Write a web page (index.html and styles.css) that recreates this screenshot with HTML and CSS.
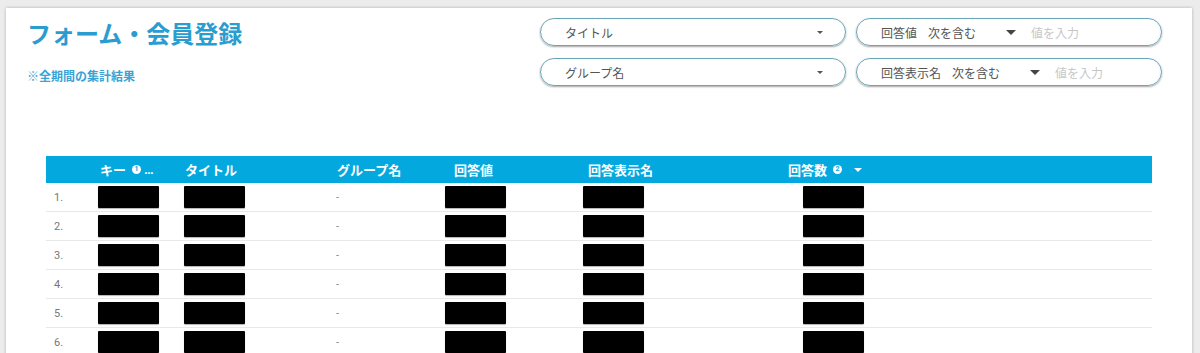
FILE: index.html
```html
<!DOCTYPE html>
<html>
<head>
	<meta charset="utf-8">
	<title>フォーム・会員登録</title>
	<link rel="stylesheet" href="styles.css">
</head>
<body>

	<div class="card">
		<div class="top">
			<div class="heading">
				<h1 class="title">フォーム・会員登録</h1>
				<p class="note">※全期間の集計結果</p>
			</div>

			<div class="filters">
				<div class="pill select">
					<span>タイトル</span>
					<i class="caret-sm"></i>
				</div>
				<div class="pill">
					<span class="label">回答値</span>
					<span class="op">次を含む</span>
					<i class="caret"></i>
					<span class="placeholder">値を入力</span>
				</div>
				<div class="pill select">
					<span>グループ名</span>
					<i class="caret-sm"></i>
				</div>
				<div class="pill">
					<span class="label">回答表示名</span>
					<span class="op">次を含む</span>
					<i class="caret"></i>
					<span class="placeholder">値を入力</span>
				</div>
			</div>
		</div>

		<div class="table">
			<div class="row head">
				<div class="cell"></div>
				<div class="cell key">キー <span class="num-badge">1</span><span class="dots">…</span></div>
				<div class="cell c-title">タイトル</div>
				<div class="cell c-group">グループ名</div>
				<div class="cell c-value">回答値</div>
				<div class="cell c-name">回答表示名</div>
				<div class="cell c-count">回答数 <span class="num-badge">2</span><i class="caret-head"></i></div>
				<div class="cell"></div>
			</div>

			<div class="row">
				<div class="cell idx">1.</div>
				<div class="cell"><span class="mask"></span></div>
				<div class="cell c-title"><span class="mask"></span></div>
				<div class="cell c-group dash">-</div>
				<div class="cell"><span class="mask"></span></div>
				<div class="cell c-name"><span class="mask"></span></div>
				<div class="cell c-count"><span class="mask"></span></div>
				<div class="cell"></div>
			</div>
			<div class="row">
				<div class="cell idx">2.</div>
				<div class="cell"><span class="mask"></span></div>
				<div class="cell c-title"><span class="mask"></span></div>
				<div class="cell c-group dash">-</div>
				<div class="cell"><span class="mask"></span></div>
				<div class="cell c-name"><span class="mask"></span></div>
				<div class="cell c-count"><span class="mask"></span></div>
				<div class="cell"></div>
			</div>
			<div class="row">
				<div class="cell idx">3.</div>
				<div class="cell"><span class="mask"></span></div>
				<div class="cell c-title"><span class="mask"></span></div>
				<div class="cell c-group dash">-</div>
				<div class="cell"><span class="mask"></span></div>
				<div class="cell c-name"><span class="mask"></span></div>
				<div class="cell c-count"><span class="mask"></span></div>
				<div class="cell"></div>
			</div>
			<div class="row">
				<div class="cell idx">4.</div>
				<div class="cell"><span class="mask"></span></div>
				<div class="cell c-title"><span class="mask"></span></div>
				<div class="cell c-group dash">-</div>
				<div class="cell"><span class="mask"></span></div>
				<div class="cell c-name"><span class="mask"></span></div>
				<div class="cell c-count"><span class="mask"></span></div>
				<div class="cell"></div>
			</div>
			<div class="row">
				<div class="cell idx">5.</div>
				<div class="cell"><span class="mask"></span></div>
				<div class="cell c-title"><span class="mask"></span></div>
				<div class="cell c-group dash">-</div>
				<div class="cell"><span class="mask"></span></div>
				<div class="cell c-name"><span class="mask"></span></div>
				<div class="cell c-count"><span class="mask"></span></div>
				<div class="cell"></div>
			</div>
			<div class="row">
				<div class="cell idx">6.</div>
				<div class="cell"><span class="mask"></span></div>
				<div class="cell c-title"><span class="mask"></span></div>
				<div class="cell c-group dash">-</div>
				<div class="cell"><span class="mask"></span></div>
				<div class="cell c-name"><span class="mask"></span></div>
				<div class="cell c-count"><span class="mask"></span></div>
				<div class="cell"></div>
			</div>
		</div>
	</div>

</body>
</html>
```

FILE: styles.css
```css
* {
	margin: 0;
	padding: 0;
	box-sizing: border-box;
}

html {
	font-family: Roboto, "Noto Sans CJK JP", sans-serif;
}

body {
	background-color: #ececec;
	padding: 8px 8px 0 6px;
	overflow: hidden;
}

.card {
	background-color: #fff;
	min-height: 400px;
	box-shadow: 0 0 3px rgba(0, 0, 0, .25);
}

.top {
	display: flex;
	justify-content: space-between;
	align-items: flex-start;
	padding: 10px 30px 0 21px;
}

.title {
	margin-top: 2px;
	font-size: 24px;
	line-height: 30px;
	font-weight: bold;
	color: #2a9dd0;
}

.note {
	margin-top: 19px;
	font-size: 12px;
	line-height: 16px;
	font-weight: bold;
	color: #3aa3d4;
}

.filters {
	display: grid;
	grid-template-columns: 306px 306px;
	gap: 12px 10px;
}

.pill {
	height: 28px;
	border: 1px solid #6aa5b8;
	border-radius: 14px;
	box-shadow: 0 1px 2px rgba(0, 0, 0, .35);
	display: flex;
	align-items: center;
	padding: 0 20px 0 24px;
	font-size: 12px;
	color: #555;
}

.pill.select {
	justify-content: space-between;
}

.label {
	margin-right: 11px;
}

.op {
	margin-right: 30px;
}

.placeholder {
	margin-left: 15px;
	color: #c8c8c8;
}

.caret-sm {
	border-left: 3px solid transparent;
	border-right: 3px solid transparent;
	border-top: 3px solid #555;
	margin-right: 2px;
}

.caret {
	border-left: 5px solid transparent;
	border-right: 5px solid transparent;
	border-top: 5px solid #444;
}

.table {
	margin: 70px 40px 0 40px;
}

.row {
	display: grid;
	grid-template-columns: 52px 82px 150px 115px 135px 120px 170px 1fr;
	height: 29px;
	border-bottom: 1px solid #e8e8e8;
	align-items: center;
}

.row.head {
	height: 27px;
	border-bottom: none;
	background-color: #03a8df;
	color: #fff;
	font-size: 13px;
	font-weight: bold;
}

.cell {
	display: flex;
	align-items: center;
}

.head .key {
	padding-left: 2px;
}

.head .c-title {
	padding-left: 5px;
}

.head .c-group {
	padding-left: 7px;
}

.head .c-value {
	padding-left: 9px;
}

.head .c-name {
	padding-left: 8px;
}

.head .c-count {
	justify-content: flex-end;
	padding-right: 8px;
}

.num-badge {
	width: 9px;
	height: 9px;
	border-radius: 50%;
	background-color: #fff;
	color: #03a8df;
	font-size: 7px;
	line-height: 9px;
	text-align: center;
	margin-left: 6px;
}

.dots {
	margin-left: 3px;
}

.caret-head {
	border-left: 4px solid transparent;
	border-right: 4px solid transparent;
	border-top: 4px solid #fff;
	margin-left: 12px;
}

.idx {
	padding-left: 8px;
	font-size: 11px;
	color: #777;
}

.c-title {
	padding-left: 4px;
}

.c-name {
	padding-left: 3px;
}

.c-count {
	justify-content: flex-end;
	padding-right: 6px;
}

.dash {
	padding-left: 6px;
	font-size: 11px;
	color: #888;
}

.mask {
	width: 61px;
	height: 22px;
	background-color: #000;
	border-radius: 1px;
	box-shadow: 0 1px 1px rgba(0, 0, 0, .3);
}
```
